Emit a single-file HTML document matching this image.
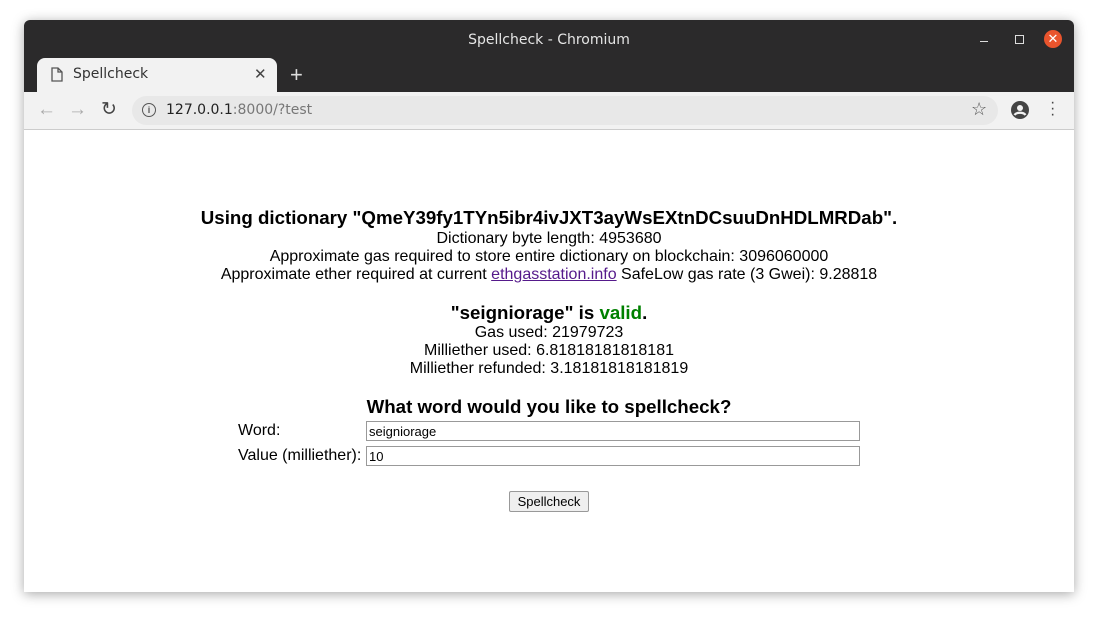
<!DOCTYPE html>
<html><head><style>
body{margin:0;width:1098px;height:619px;background:#fff;position:relative;overflow:hidden;font-family:"Liberation Sans",sans-serif}
.win{position:absolute;left:24px;top:20px;width:1050px;height:572px;background:#fff;box-shadow:0 2px 12px rgba(0,0,0,.35);border-radius:6px 6px 0 0;overflow:hidden}
.title{position:absolute;left:0;top:0;width:1050px;height:72px;background:#2b2a2b}
.ttext{position:absolute;top:12px;width:100%;text-align:center;color:#e6e6e6;font-size:14px;font-family:"DejaVu Sans",sans-serif}
.tab{position:absolute;left:13px;top:38px;width:240px;height:34px;background:#f2f2f2;border-radius:8px 8px 0 0}
.toolbar{position:absolute;left:0;top:72px;width:1050px;height:37px;background:#f2f2f2;border-bottom:1px solid #ccc}
.url{position:absolute;left:108px;top:4px;width:866px;height:29px;background:#e8e8e8;border-radius:15px}
.c{position:absolute;left:0;width:1098px;text-align:center;font-size:16px;color:#000}
.b{font-weight:bold;font-size:18.72px}
input{position:absolute;font-family:"Liberation Sans",sans-serif;font-size:13px;border:1px solid #999;height:20px;box-sizing:border-box;padding:1px 2px;width:494px;left:366px;background:#fff}
</style></head><body>
<div class="win">
<div class="title"><div class="ttext">Spellcheck - Chromium</div>
<div style="position:absolute;left:956px;top:21px;width:8px;height:1px;background:#ddd"></div>
<div style="position:absolute;left:991px;top:15px;width:7px;height:7px;border:1px solid #ddd"></div>
<div style="position:absolute;left:1020px;top:10px;width:18px;height:18px;border-radius:50%;background:#e9542d;color:#fff;font-size:13px;text-align:center;line-height:18px">✕</div>
<div class="tab">
<svg style="position:absolute;left:14px;top:9px" width="12" height="15" viewBox="0 0 12 15"><path d="M1 1h6l4 4v9H1z M7 1v4h4" fill="none" stroke="#555" stroke-width="1.3"/></svg>
<div style="position:absolute;left:36px;top:8px;font-family:'DejaVu Sans',sans-serif;font-size:14px;color:#333">Spellcheck</div>
<div style="position:absolute;left:217px;top:7px;font-size:15px;color:#444">✕</div></div>
<div style="position:absolute;left:266px;top:42px;font-size:22px;color:#ddd">+</div>
</div>
<div class="toolbar">
<div style="position:absolute;left:13px;top:7px;font-size:19px;color:#aaa">←</div>
<div style="position:absolute;left:44px;top:7px;font-size:19px;color:#aaa">→</div>
<div style="position:absolute;left:77px;top:6px;font-size:19px;color:#444">↻</div>
<div class="url">
<div style="position:absolute;left:10px;top:7px;width:12px;height:12px;border:1.5px solid #555;border-radius:50%;font-size:9px;text-align:center;line-height:12px;font-weight:bold;color:#555">i</div>
<div style="position:absolute;left:34px;top:6px;font-family:'DejaVu Sans',sans-serif;font-size:14px;color:#222">127.0.0.1<span style="color:#777">:8000/?test</span></div></div>
<div style="position:absolute;left:947px;top:7px;font-size:18px;color:#555">☆</div>
<svg style="position:absolute;left:987px;top:9px" width="18" height="18" viewBox="0 0 18 18"><circle cx="9" cy="9" r="9" fill="#444"/><circle cx="9" cy="7" r="3" fill="#f2f2f2"/><path d="M3.5 14c2-3 9-3 11 0" stroke="#f2f2f2" stroke-width="2.2" fill="none"/></svg>
<div style="position:absolute;left:1026px;top:8px;font-size:16px;color:#444;line-height:6px;width:4px">·<br>·<br>·</div>
</div>
</div>
<div class="c b" style="top:207px">Using dictionary "QmeY39fy1TYn5ibr4ivJXT3ayWsEXtnDCsuuDnHDLMRDab".</div>
<div class="c" style="top:230px">Dictionary byte length: 4953680</div>
<div class="c" style="top:248px">Approximate gas required to store entire dictionary on blockchain: 3096060000</div>
<div class="c" style="top:266px">Approximate ether required at current <span style="color:#551a8b;text-decoration:underline">ethgasstation.info</span> SafeLow gas rate (3 Gwei): 9.28818</div>
<div class="c b" style="top:302px">"seigniorage" is <span style="color:#008000">valid</span>.</div>
<div class="c" style="top:324px">Gas used: 21979723</div>
<div class="c" style="top:342px">Milliether used: 6.81818181818181</div>
<div class="c" style="top:360px">Milliether refunded: 3.18181818181819</div>
<div class="c b" style="top:396px">What word would you like to spellcheck?</div>
<div style="position:absolute;left:238px;top:422px;font-size:16px">Word:</div>
<div style="position:absolute;left:238px;top:447px;font-size:16px">Value (milliether):</div>
<input style="top:421px" value="seigniorage">
<input style="top:446px" value="10">
<div style="position:absolute;left:509px;top:491px;width:78px;height:19px;border:1px solid #999;background:#efefef;border-radius:2px;font-size:13px;text-align:center;line-height:19px">Spellcheck</div>
</body></html>
